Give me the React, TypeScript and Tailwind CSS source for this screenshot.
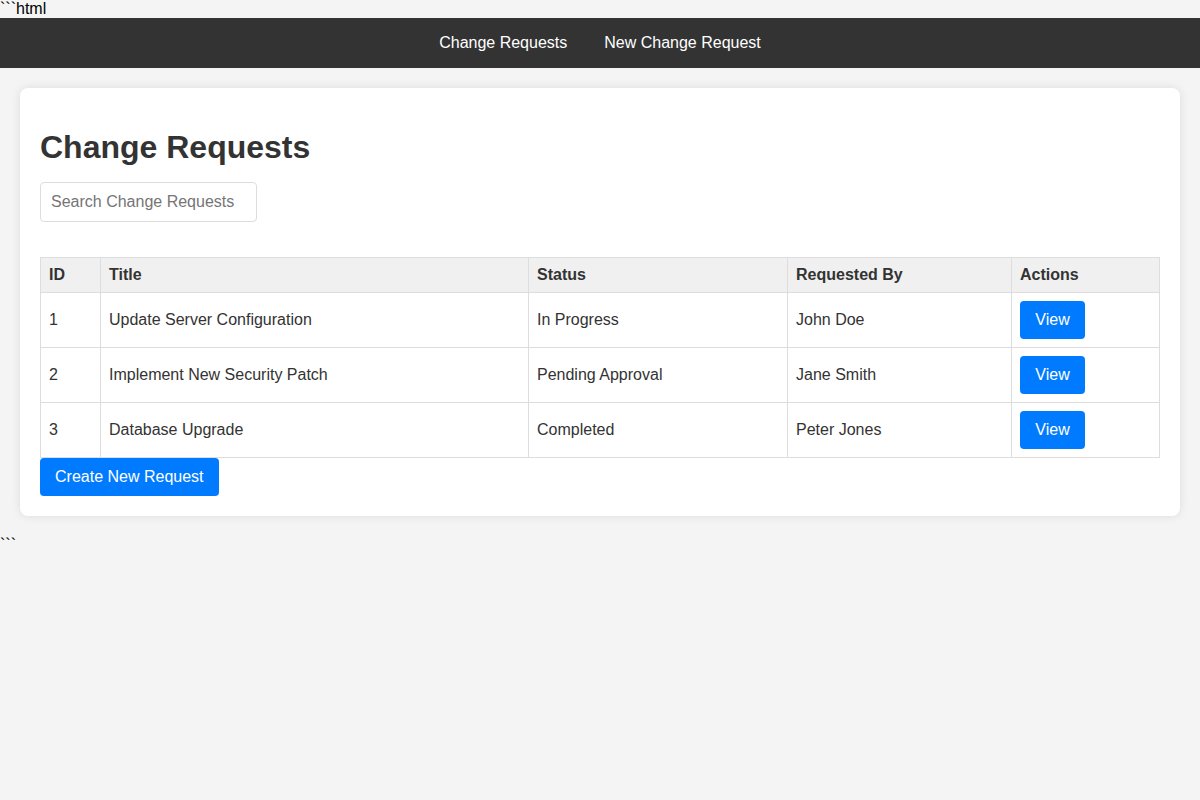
import React from "react";

const REQUESTS = [
  { id: 1, title: "Update Server Configuration", status: "In Progress", by: "John Doe" },
  { id: 2, title: "Implement New Security Patch", status: "Pending Approval", by: "Jane Smith" },
  { id: 3, title: "Database Upgrade", status: "Completed", by: "Peter Jones" },
];

export default function App() {
  return (
    <div className="min-h-[800px] bg-[#f4f4f4] text-[16px] leading-[18px] text-black font-['Liberation_Sans',Arial,sans-serif]">
      <div>```html</div>

      <nav className="flex h-[50px] items-center justify-center gap-[37px] bg-[#333333] text-white">
        <a className="cursor-pointer">Change Requests</a>
        <a className="cursor-pointer">New Change Request</a>
      </nav>

      <div className="mx-5 mt-5 rounded-lg bg-white p-5 shadow-[0_0_10px_rgba(0,0,0,0.1)] text-[#333333]">
        <h1 className="mt-[21px] mb-[16px] text-[32px] font-bold leading-[37px]">Change Requests</h1>

        <input
          type="text"
          placeholder="Search Change Requests"
          className="h-10 w-[217px] rounded border border-[#dddddd] px-[10px] text-[16px] outline-none placeholder:text-[#757575]"
        />

        <table className="mt-[35px] w-full table-fixed border-collapse">
          <thead>
            <tr className="bg-[#f0f0f0] text-left">
              <th className="w-[60px] border border-[#dddddd] p-2 font-bold">ID</th>
              <th className="w-[428px] border border-[#dddddd] p-2 font-bold">Title</th>
              <th className="w-[259px] border border-[#dddddd] p-2 font-bold">Status</th>
              <th className="w-[224px] border border-[#dddddd] p-2 font-bold">Requested By</th>
              <th className="border border-[#dddddd] p-2 font-bold">Actions</th>
            </tr>
          </thead>
          <tbody>
            {REQUESTS.map((r) => (
              <tr key={r.id}>
                <td className="border border-[#dddddd] p-2">{r.id}</td>
                <td className="border border-[#dddddd] p-2">{r.title}</td>
                <td className="border border-[#dddddd] p-2">{r.status}</td>
                <td className="border border-[#dddddd] p-2">{r.by}</td>
                <td className="border border-[#dddddd] p-2">
                  <button className="w-[65px] rounded bg-[#007bff] py-[10px] text-white">View</button>
                </td>
              </tr>
            ))}
          </tbody>
        </table>

        <button className="block rounded bg-[#007bff] px-[15px] py-[10px] text-white">Create New Request</button>
      </div>

      <div className="mt-5">```</div>
    </div>
  );
}
